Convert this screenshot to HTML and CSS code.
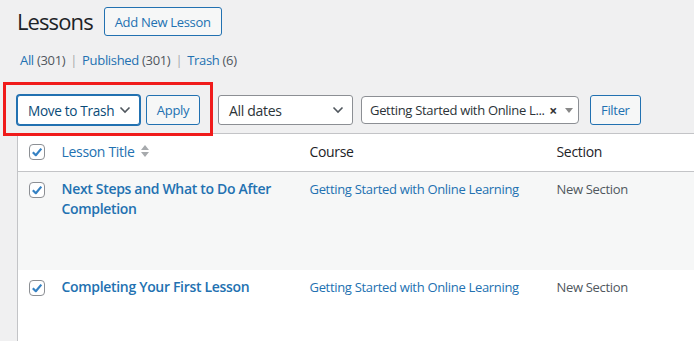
FILE: index.html
```html
<!DOCTYPE html>
<html lang="en">
<head>
  <meta charset="UTF-8">
  <meta name="viewport" content="width=device-width, initial-scale=1.0">
  <title>Lessons</title>
  <link rel="stylesheet" href="styles.css">
</head>
<body>
  <div class="wrap">
    <div class="head">
      <h1>Lessons</h1>
      <a href="#" class="btn add-new">Add New Lesson</a>
    </div>

    <ul class="views">
      <li><a href="#">All <span class="count">(301)</span></a></li>
      <li class="sep">|</li>
      <li><a href="#">Published <span class="count">(301)</span></a></li>
      <li class="sep">|</li>
      <li><a href="#">Trash <span class="count">(6)</span></a></li>
    </ul>

    <div class="tablenav">
      <div class="bulk">
        <div class="select focused">
          <span>Move to Trash</span>
          <svg width="12" height="8" viewBox="0 0 12 8"><path d="M1.5 1.5 L6 6 L10.5 1.5" fill="none" stroke="#50575e" stroke-width="1.6"/></svg>
        </div>
        <button class="btn">Apply</button>
      </div>
      <div class="select dates">
        <span>All dates</span>
        <svg width="12" height="8" viewBox="0 0 12 8"><path d="M1.5 1.5 L6 6 L10.5 1.5" fill="none" stroke="#50575e" stroke-width="1.6"/></svg>
      </div>
      <div class="select2">
        <span class="sel-text">Getting Started with Online L...</span>
        <span class="sel-clear">×</span>
        <span class="sel-arrow"></span>
      </div>
      <button class="btn">Filter</button>
    </div>

    <div class="highlight"></div>

    <table class="list">
      <thead>
        <tr>
          <td class="check"><span class="cb"><svg width="16" height="16" viewBox="0 0 16 16"><path d="M3.8 8.2 L6.8 11.2 L12.3 4.6" fill="none" stroke="#3582c4" stroke-width="2.2" stroke-linejoin="round"/></svg></span></td>
          <th class="col-title"><a href="#">Lesson Title</a>
            <span class="sort"><svg width="10" height="14" viewBox="0 0 10 14"><path d="M1 6 L5 1 L9 6 Z M1 8 L5 13 L9 8 Z" fill="#a7aaad"/></svg></span>
          </th>
          <th class="col-course">Course</th>
          <th class="col-section">Section</th>
        </tr>
      </thead>
      <tbody>
        <tr class="alt tall">
          <td class="check"><span class="cb"><svg width="16" height="16" viewBox="0 0 16 16"><path d="M3.8 8.2 L6.8 11.2 L12.3 4.6" fill="none" stroke="#3582c4" stroke-width="2.2" stroke-linejoin="round"/></svg></span></td>
          <td><a href="#" class="row-title">Next Steps and What to Do After Completion</a></td>
          <td><a href="#">Getting Started with Online Learning</a></td>
          <td class="muted">New Section</td>
        </tr>
        <tr class="tall">
          <td class="check"><span class="cb"><svg width="16" height="16" viewBox="0 0 16 16"><path d="M3.8 8.2 L6.8 11.2 L12.3 4.6" fill="none" stroke="#3582c4" stroke-width="2.2" stroke-linejoin="round"/></svg></span></td>
          <td><a href="#" class="row-title">Completing Your First Lesson</a></td>
          <td><a href="#">Getting Started with Online Learning</a></td>
          <td class="muted">New Section</td>
        </tr>
      </tbody>
    </table>
  </div>
</body>
</html>
```

FILE: styles.css
```css
* {
  box-sizing: border-box;
}
body {
  margin: 0;
  background-color: #f0f0f1;
  font-family: "Open Sans", "Noto Sans", sans-serif;
  font-size: 13px;
  letter-spacing: -0.32px;
  color: #3c434a;
  overflow: hidden;
}
a {
  color: #2271b1;
  text-decoration: none;
}
.wrap {
  position: relative;
  padding-left: 17px;
}
.head {
  display: flex;
  align-items: center;
  gap: 11px;
  padding-top: 7px;
}
h1 {
  margin: 0;
  font-size: 22px;
  font-weight: 400;
  line-height: 29px;
  letter-spacing: -0.9px;
  color: #1d2327;
}
.btn {
  display: inline-flex;
  align-items: center;
  height: 29px;
  padding: 0 10px;
  border: 1px solid #2271b1;
  border-radius: 3px;
  background-color: #f6f7f7;
  color: #2271b1;
  font-family: inherit;
  font-size: 13px;
  letter-spacing: -0.32px;
  white-space: nowrap;
}
.views {
  display: flex;
  gap: 5px;
  margin: 15px 0 0 3px;
  padding: 0;
  list-style: none;
  line-height: 18px;
}
.views .count {
  color: #50575e;
}
.views .sep {
  color: #a7aaad;
}
.tablenav {
  display: flex;
  align-items: center;
  margin-top: 26px;
  height: 30px;
}
.bulk {
  display: flex;
  gap: 6px;
  margin-right: 18px;
}
.select {
  display: flex;
  align-items: center;
  justify-content: space-between;
  height: 30px;
  padding: 0 8px 0 10px;
  border: 1px solid #8c8f94;
  border-radius: 3px;
  background-color: #fff;
  color: #2c3338;
  font-size: 14px;
  white-space: nowrap;
}
.select.focused {
  width: 123px;
  border-color: #2271b1;
  box-shadow: 0 0 0 1px #2271b1;
  color: #0a4b78;
  font-size: 13.6px;
}
.select.dates {
  width: 135px;
}
.bulk .btn {
  height: 30px;
  width: 54px;
  justify-content: center;
}
.select2 {
  display: flex;
  align-items: center;
  width: 218px;
  height: 28px;
  margin-left: 8px;
  padding: 0 5px 0 8px;
  border: 1px solid #8c8f94;
  border-radius: 4px;
  background-color: #fff;
  color: #2c3338;
  font-size: 13px;
}
.sel-text {
  flex: 1;
  white-space: nowrap;
}
.sel-clear {
  font-weight: bold;
  font-size: 14px;
  color: #333;
  margin-right: 8px;
}
.sel-arrow {
  width: 0;
  height: 0;
  border-left: 4px solid transparent;
  border-right: 4px solid transparent;
  border-top: 5px solid #888;
}
.tablenav > .btn {
  margin-left: 11px;
  height: 30px;
}
.highlight {
  position: absolute;
  left: 3px;
  top: 82px;
  width: 210px;
  height: 54px;
  border: 3px solid #f01b1b;
  z-index: 2;
}
.list {
  margin-top: 8px;
  width: 720px;
  border-collapse: collapse;
  table-layout: fixed;
  background-color: #fff;
  border: 1px solid #c3c4c7;
}
.list th,
.list td {
  text-align: left;
  vertical-align: top;
  font-weight: 400;
  line-height: 20px;
}
.list thead th,
.list thead td {
  height: 36px;
  padding: 8px 10px 8px 9px;
  border-bottom: 1px solid #c3c4c7;
  color: #1d2327;
  font-size: 14px;
}
.list thead th a {
  color: #2271b1;
}
.list .check {
  width: 35px;
  padding: 10px 0 0 11px;
}
.list thead .check {
  padding: 10px 0 0 11px;
}
.col-title {
  width: 248px;
}
.col-course {
  width: 247px;
}
.sort {
  display: inline-block;
  vertical-align: -1px;
  margin-left: 2px;
}
.cb {
  display: block;
  width: 16px;
  height: 16px;
  border: 1px solid #8c8f94;
  border-radius: 4px;
  background-color: #fff;
  line-height: 0;
}
.cb svg {
  margin: -1px 0 0 -1px;
}
.list tbody td {
  height: 98px;
  padding: 7px 10px 8px 9px;
}
.list tbody td.check {
  padding: 10px 0 0 11px;
}
.list tbody tr.alt {
  background-color: #f6f7f7;
}
.row-title {
  font-size: 14px;
  font-weight: 600;
}
.muted {
  color: #50575e;
}
```
